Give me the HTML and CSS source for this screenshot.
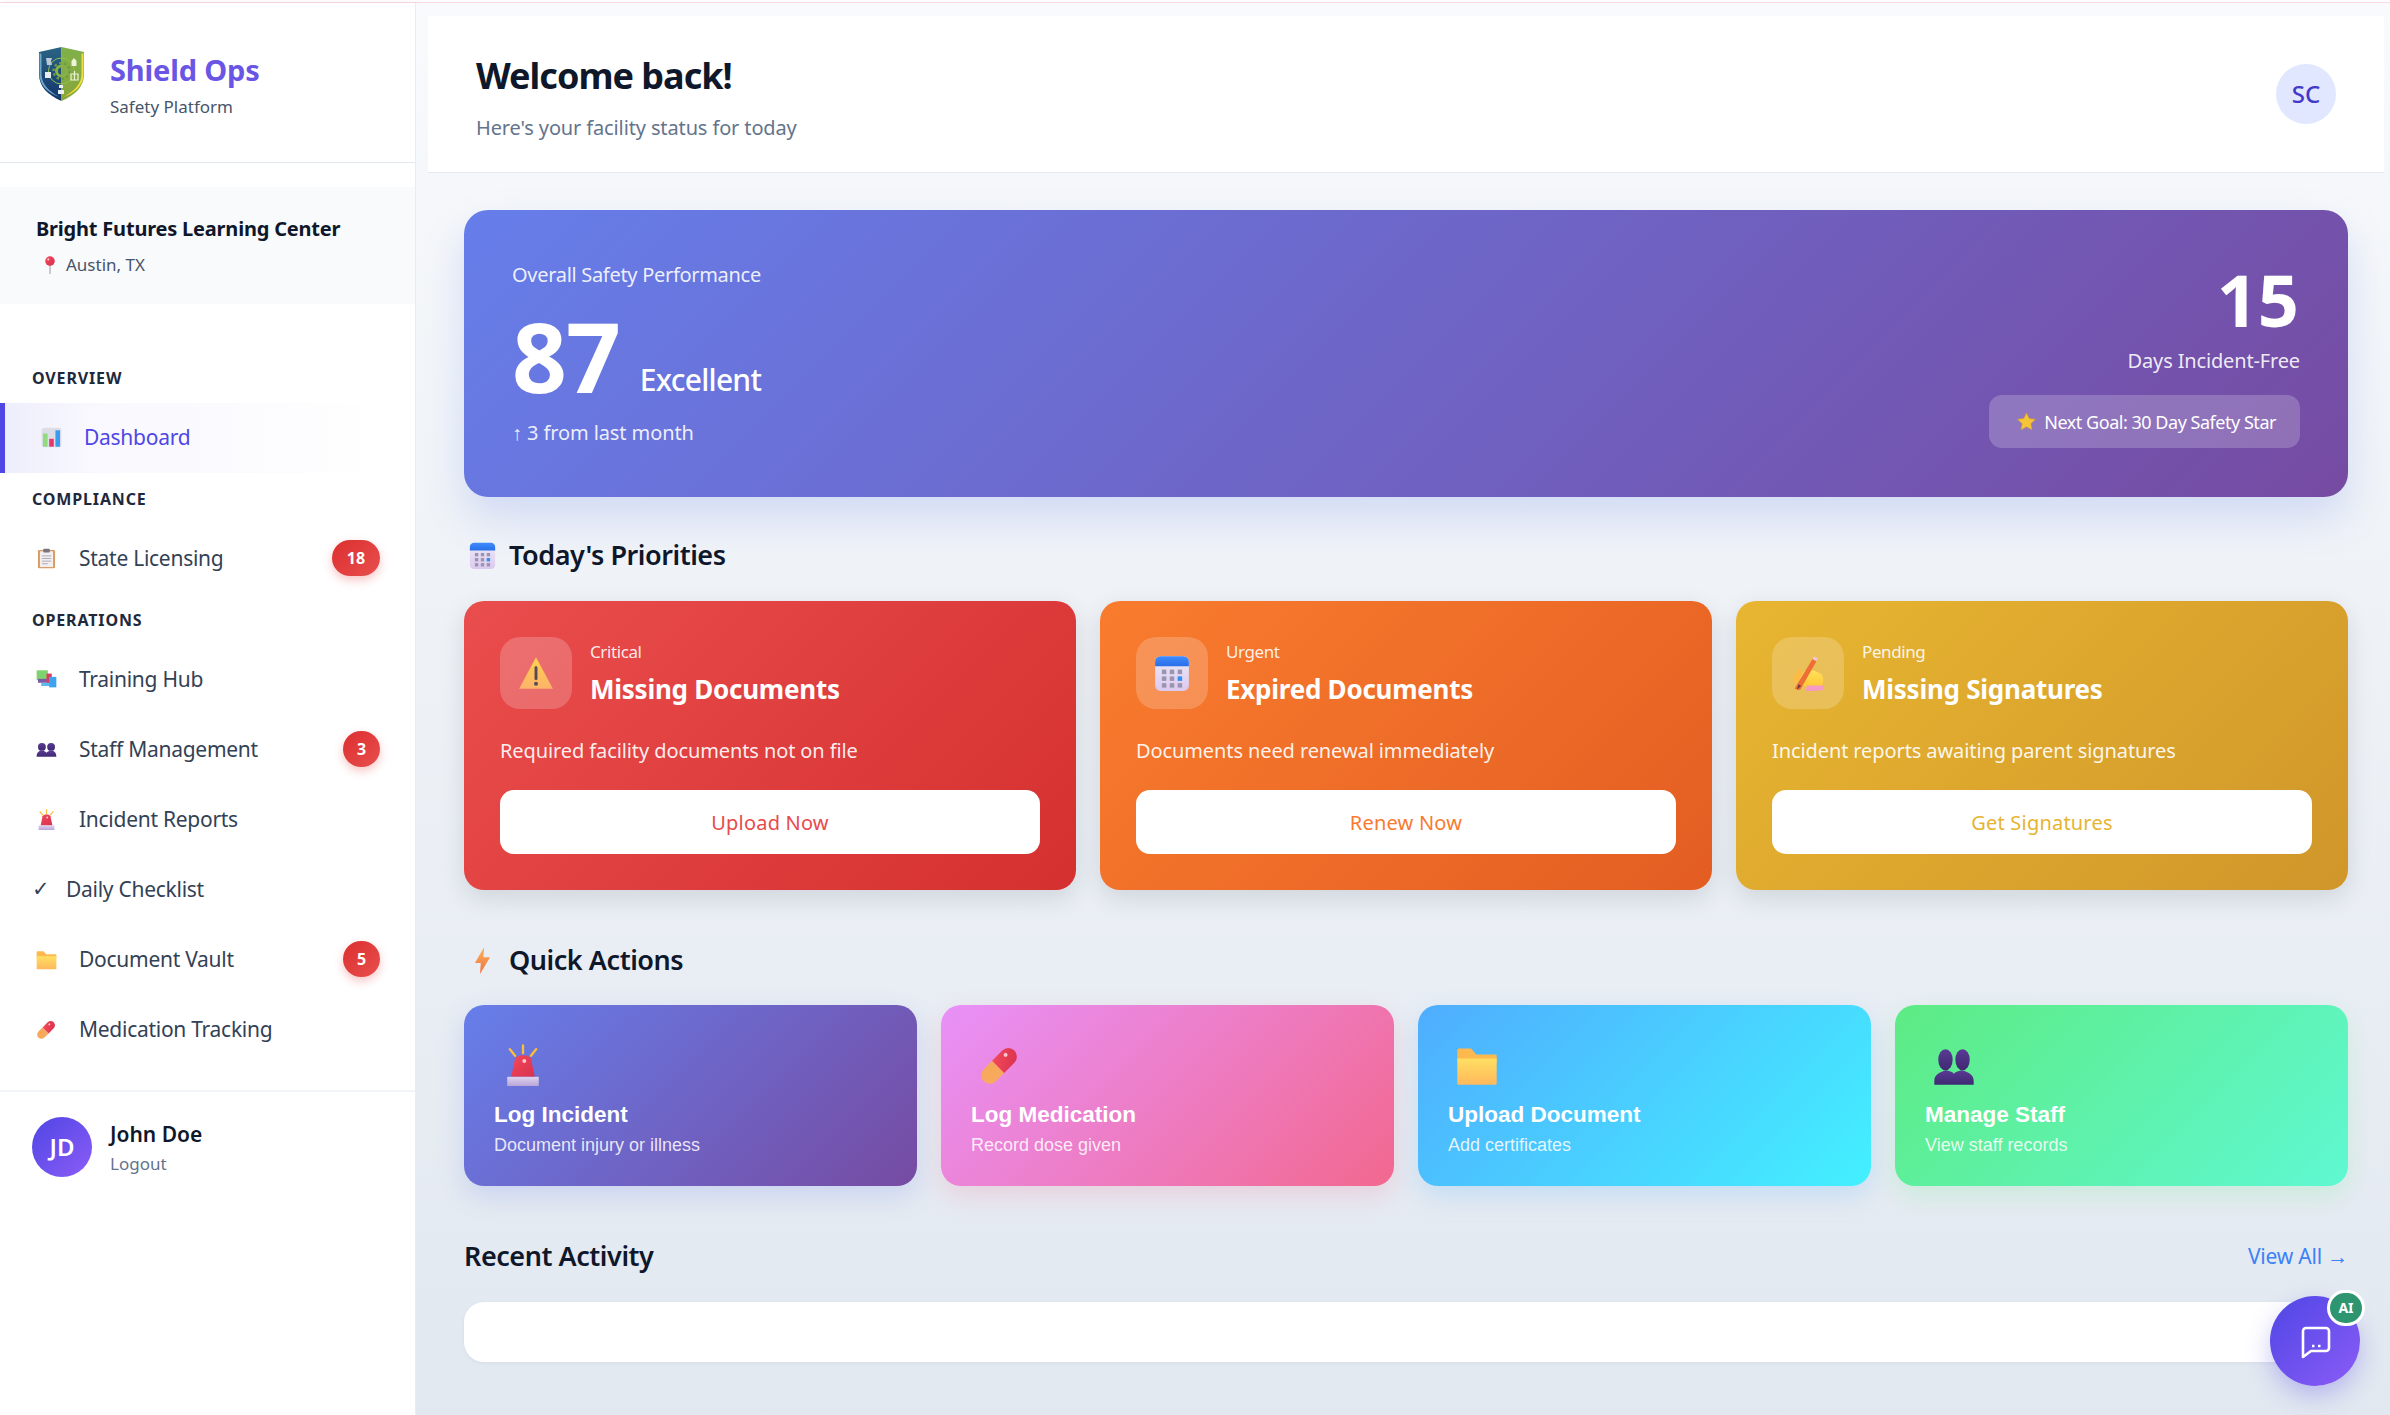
FILE: index.html
```html
<!DOCTYPE html>
<html lang="en">

<head>
    <meta charset="utf8">
    <title>Shield Ops</title>

    <link rel="stylesheet" href="styles.css">
</head>

<body>
    <svg class="icon-defs" xmlns="http://www.w3.org/2000/svg">
        <defs>
            <linearGradient id="g-blue" x1="0" y1="0" x2="0" y2="1"><stop offset="0" stop-color="#3f8cff"/><stop offset="1" stop-color="#2a6fe8"/></linearGradient>
            <linearGradient id="g-page" x1="0" y1="0" x2="0" y2="1"><stop offset="0" stop-color="#ececf6"/><stop offset="1" stop-color="#dcc9ef"/></linearGradient>
            <linearGradient id="g-warn" x1="0" y1="0" x2="0" y2="1"><stop offset="0" stop-color="#ffd24f"/><stop offset="1" stop-color="#fdb369"/></linearGradient>
            <linearGradient id="g-red" x1="0" y1="0" x2="1" y2="1"><stop offset="0" stop-color="#f2495a"/><stop offset="1" stop-color="#d9304f"/></linearGradient>
            <linearGradient id="g-pill" x1="0" y1="1" x2="1" y2="0"><stop offset="0" stop-color="#f9aa5f"/><stop offset="1" stop-color="#f6a85a"/></linearGradient>
            <linearGradient id="g-folder" x1="0" y1="0" x2="0" y2="1"><stop offset="0" stop-color="#ffdf62"/><stop offset="1" stop-color="#ffb85c"/></linearGradient>
            <linearGradient id="g-purple" x1="0" y1="0" x2="0" y2="1"><stop offset="0" stop-color="#5a3a94"/><stop offset="1" stop-color="#3f2a72"/></linearGradient>
            <linearGradient id="g-bolt" x1="0" y1="0" x2="0" y2="1"><stop offset="0" stop-color="#f9b45c"/><stop offset="1" stop-color="#f2703f"/></linearGradient>
            <linearGradient id="g-base" x1="0" y1="0" x2="0" y2="1"><stop offset="0" stop-color="#ded3ee"/><stop offset="1" stop-color="#b9a5d8"/></linearGradient>
            <linearGradient id="g-hand" x1="0" y1="0" x2="0" y2="1"><stop offset="0" stop-color="#ffe25a"/><stop offset="1" stop-color="#ffc83a"/></linearGradient>
            <linearGradient id="g-shield-l" x1="0" y1="0" x2="0" y2="1"><stop offset="0" stop-color="#2a6485"/><stop offset="1" stop-color="#14346b"/></linearGradient>
            <linearGradient id="g-shield-r" x1="0" y1="0" x2="0" y2="1"><stop offset="0" stop-color="#7fb04a"/><stop offset="1" stop-color="#8aa63a"/></linearGradient>
        </defs>

        <symbol id="i-chart" viewBox="0 0 32 32">
            <rect x="1" y="1" width="30" height="30" rx="4" fill="#dcdde6"/>
            <rect x="3" y="10" width="7" height="20" fill="#8fdc7e"/>
            <rect x="12.5" y="18" width="7" height="12" fill="#e23a68"/>
            <rect x="22" y="5" width="7" height="25" fill="#3a9cf0"/>
        </symbol>
        <symbol id="i-clipboard" viewBox="0 0 32 32">
            <rect x="3" y="3" width="26" height="28" rx="2" fill="#d99a62"/>
            <rect x="6" y="5" width="20" height="24" fill="#f3eef0"/>
            <rect x="11" y="1" width="10" height="6" rx="1.5" fill="#77757f"/>
            <path d="M9 12h14M9 16h14M9 20h14M9 24h9" stroke="#a9a6b4" stroke-width="1.4"/>
        </symbol>
        <symbol id="i-books" viewBox="0 0 32 32">
            <rect x="1" y="2" width="17" height="15" fill="#7ed36f"/>
            <rect x="3" y="15" width="17" height="6" fill="#7b5aa8"/>
            <rect x="16" y="7" width="8" height="16" fill="#dd3a60"/>
            <rect x="20" y="12" width="11" height="16" fill="#3ea3ee"/>
            <rect x="8" y="21" width="12" height="5" fill="#5fb8ee"/>
        </symbol>
        <symbol id="i-users" viewBox="0 0 32 32">
            <circle cx="9" cy="12" r="6" fill="url(#g-purple)"/>
            <circle cx="23" cy="12" r="6" fill="url(#g-purple)"/>
            <path d="M1 27c0-6 3-9 8-9 3 0 5 1 7 3 2-2 4-3 7-3 5 0 8 3 8 9z" fill="url(#g-purple)"/>
        </symbol>
        <symbol id="i-users-tall" viewBox="0 0 32 32">
            <ellipse cx="9.500" cy="12" rx="5.500" ry="8" fill="url(#g-purple)"/>
            <ellipse cx="22.500" cy="12" rx="5.500" ry="8" fill="url(#g-purple)"/>
            <path d="M1 31v-3c0-4 3-6 8.500-8 4 .5 6.500 2 6.500 3 0-1 2.500-2.500 6.500-3 5.500 2 8.500 4 8.500 8v3z" fill="url(#g-purple)"/>
        </symbol>
        <symbol id="i-alarm" viewBox="0 0 32 32">
            <path d="M16 1v6M6 4l4 5M26 4l-4 5" stroke="#fdbd3c" stroke-width="1.800" stroke-linecap="round"/>
            <path d="M10 11c1-1.500 3-2.500 6-2.500s5 1 6 2.500l3 14H7z" fill="url(#g-red)"/>
            <circle cx="17" cy="13" r="1.500" fill="#ffc6cc"/>
            <rect x="4" y="25" width="24" height="7" fill="url(#g-base)"/>
        </symbol>
        <symbol id="i-folder" viewBox="0 0 32 32">
            <path d="M1 5c0-1 .6-1.500 1.500-1.500h9l4 4.500H30c.6 0 1 .5 1 1V14H1z" fill="#fdb94e"/>
            <path d="M1 11h30v19c0 .6-.4 1-1 1H2c-.6 0-1-.4-1-1z" fill="url(#g-folder)"/>
        </symbol>
        <symbol id="i-pill" viewBox="0 0 32 32">
            <g transform="rotate(-45 16 16)">
                <path d="M16 9.500H7a6.500 6.500 0 0 0 0 13h9z" transform="translate(-2 0)" fill="url(#g-pill)"/>
                <path d="M14 9.500h11a6.500 6.500 0 0 1 0 13H14z" fill="url(#g-red)"/>
                <circle cx="24.500" cy="13.500" r="1.500" fill="#ffc6d0"/>
            </g>
        </symbol>
        <symbol id="i-calendar" viewBox="0 0 32 32">
            <rect x="1" y="1" width="30" height="31" rx="5" fill="url(#g-page)"/>
            <path d="M1 10V6a5 5 0 0 1 5-5h20a5 5 0 0 1 5 5v4z" fill="url(#g-blue)"/>
            <g fill="#9b94b0">
                <rect x="7" y="13" width="4" height="4"/><rect x="14" y="13" width="4" height="4"/><rect x="21" y="13" width="4" height="4"/>
                <rect x="7" y="19" width="4" height="4"/><rect x="14" y="19" width="4" height="4"/>
                <rect x="7" y="25" width="4" height="4"/><rect x="14" y="25" width="4" height="4"/><rect x="21" y="25" width="4" height="4"/>
            </g>
            <rect x="21" y="19" width="4" height="4" fill="#2f8ff5"/>
        </symbol>
        <symbol id="i-warning" viewBox="0 0 32 32">
            <path d="M16 2 31 30H1z" fill="url(#g-warn)"/>
            <rect x="14.700" y="10" width="2.600" height="12.500" rx="1.300" fill="#5a4a55"/>
            <circle cx="16" cy="25.500" r="1.800" fill="#5a4a55"/>
        </symbol>
        <symbol id="i-hand" viewBox="0 0 32 32">
            <path d="M13 14c3-1 6-1 9 0l6 3c2 3 2 8 0 11H13c-3-2-4-5-4-8z" fill="url(#g-hand)"/>
            <path d="M14 32c5 0 11 0 15-1 1-1 1-2 1-4H15z" fill="#f59ac0"/>
            <path d="M4 30 20 3.500l3.500 2L9 31z" fill="#ee6e35"/>
            <path d="M6 31l1.500-5 2.500 1.500z" fill="#7a3a3a"/>
            <path d="m20 3.500 1.200-2.500 3.500 2-1.200 2.500z" fill="#efc4d4"/>
            <path d="M3 27c-1-5 1-10 5-15 2 1 3 3 3 5-2 3-4 7-8 10z" fill="#fdbb45"/>
        </symbol>
        <symbol id="i-star" viewBox="0 0 32 32">
            <path d="M16 1.500 20.500 11l10.500 1.400-7.700 7.200 2 10.400L16 25l-9.300 5 2-10.400L1 12.400 11.500 11z" fill="#f6c537" stroke="#d99d2a" stroke-width="1" stroke-linejoin="round"/>
        </symbol>
        <symbol id="i-bolt" viewBox="0 0 32 32">
            <path d="M18 0 7 19h7l-1 13 12-20h-8z" fill="url(#g-bolt)"/>
        </symbol>
        <symbol id="i-pin" viewBox="0 0 32 32">
            <rect x="15" y="12" width="2" height="20" fill="#a7a4ad"/>
            <circle cx="16" cy="9" r="8.500" fill="url(#g-red)"/>
            <circle cx="13" cy="6" r="1.800" fill="#ffc6d0"/>
        </symbol>
    </svg>

    <div class="top-strip"></div>

    <div class="app">
        <aside class="sidebar">
            <div class="brand">
                <svg class="brand-logo" viewBox="0 0 47 54">
                    <path d="M23.500 0 1 5v22c0 13 9 21 22.500 27z" fill="url(#g-shield-l)"/>
                    <path d="M23.500 0 46 5v22c0 13-9 21-22.500 27z" fill="url(#g-shield-r)"/>
                    <path d="M43.500 7v20c0 10-7 17-18 23 12-4 20-12 20-23V6z" fill="#efdc3e"/>
                    <path d="M3.500 7v20c0 10 7 17 18 23-12-4-20-12-20-23V6z" fill="#6fa8c9"/>
                    <circle cx="23.500" cy="24" r="13" fill="none" stroke="#8fc04e" stroke-width="1"/>
                    <circle cx="23.500" cy="24" r="5" fill="none" stroke="#86b04a" stroke-width="3"/>
                    <circle cx="23.500" cy="24" r="8" fill="none" stroke="#6d9d42" stroke-width="2.400" stroke-dasharray="2.500 2.500"/>
                    <path d="M8 11h6l-1 3 1 4h-5z" fill="#b9c9d8"/>
                    <path d="M7 25h6v6H7z" fill="#e6edf2"/>
                    <path d="M36 11l2.500 3v5h-5v-5z" fill="#eef3d8"/>
                    <path d="M33 27h7v6h-7zM36.500 24v9" fill="none" stroke="#eef3d8" stroke-width="1.200"/>
                    <path d="M21 38h4v3h-4zM20 43h6v4h-6z" fill="#e9eef0"/>
                </svg>
                <div class="brand-text">
                    <div class="brand-name">Shield Ops</div>
                    <div class="brand-sub">Safety Platform</div>
                </div>
            </div>

            <div class="facility">
                <div class="facility-name">Bright Futures Learning Center</div>
                <div class="facility-place">
                    <svg class="pin-icon"><use href="#i-pin"/></svg>
                    Austin, TX
                </div>
            </div>

            <nav class="nav">
                <div class="nav-label">OVERVIEW</div>
                <a class="nav-row active"><svg class="nav-icon"><use href="#i-chart"/></svg>Dashboard</a>

                <div class="nav-label">COMPLIANCE</div>
                <a class="nav-row"><svg class="nav-icon"><use href="#i-clipboard"/></svg>State Licensing<span class="badge wide">18</span></a>

                <div class="nav-label">OPERATIONS</div>
                <a class="nav-row"><svg class="nav-icon"><use href="#i-books"/></svg>Training Hub</a>
                <a class="nav-row"><svg class="nav-icon"><use href="#i-users"/></svg>Staff Management<span class="badge">3</span></a>
                <a class="nav-row"><svg class="nav-icon"><use href="#i-alarm"/></svg>Incident Reports</a>
                <a class="nav-row check-row"><span class="check-mark">✓</span>Daily Checklist</a>
                <a class="nav-row"><svg class="nav-icon"><use href="#i-folder"/></svg>Document Vault<span class="badge">5</span></a>
                <a class="nav-row"><svg class="nav-icon"><use href="#i-pill"/></svg>Medication Tracking</a>
            </nav>

            <div class="user">
                <div class="user-avatar">JD</div>
                <div>
                    <div class="user-name">John Doe</div>
                    <div class="user-logout">Logout</div>
                </div>
            </div>
        </aside>

        <main class="main">
            <header class="page-head">
                <div>
                    <h1>Welcome back!</h1>
                    <p>Here's your facility status for today</p>
                </div>
                <div class="head-avatar">SC</div>
            </header>

            <div class="content">
                <section class="hero">
                    <div>
                        <div class="hero-label">Overall Safety Performance</div>
                        <div class="hero-score"><span class="score-num">87</span><span class="score-word">Excellent</span></div>
                        <div class="hero-trend">↑ 3 from last month</div>
                    </div>
                    <div class="hero-right">
                        <div class="days-num">15</div>
                        <div class="days-label">Days Incident-Free</div>
                        <div class="goal"><svg class="goal-star"><use href="#i-star"/></svg>Next Goal: 30 Day Safety Star</div>
                    </div>
                </section>

                <h2 class="section-title"><svg class="section-icon"><use href="#i-calendar"/></svg>Today's Priorities</h2>
                <div class="priorities">
                    <div class="priority red">
                        <div class="priority-head">
                            <div class="priority-icon"><svg><use href="#i-warning"/></svg></div>
                            <div>
                                <div class="priority-tag">Critical</div>
                                <div class="priority-title">Missing Documents</div>
                            </div>
                        </div>
                        <p class="priority-desc">Required facility documents not on file</p>
                        <button class="priority-btn">Upload Now</button>
                    </div>
                    <div class="priority orange">
                        <div class="priority-head">
                            <div class="priority-icon"><svg><use href="#i-calendar"/></svg></div>
                            <div>
                                <div class="priority-tag">Urgent</div>
                                <div class="priority-title">Expired Documents</div>
                            </div>
                        </div>
                        <p class="priority-desc">Documents need renewal immediately</p>
                        <button class="priority-btn">Renew Now</button>
                    </div>
                    <div class="priority yellow">
                        <div class="priority-head">
                            <div class="priority-icon"><svg><use href="#i-hand"/></svg></div>
                            <div>
                                <div class="priority-tag">Pending</div>
                                <div class="priority-title">Missing Signatures</div>
                            </div>
                        </div>
                        <p class="priority-desc">Incident reports awaiting parent signatures</p>
                        <button class="priority-btn">Get Signatures</button>
                    </div>
                </div>

                <h2 class="section-title quick-title"><svg class="section-icon"><use href="#i-bolt"/></svg>Quick Actions</h2>
                <div class="actions">
                    <button class="action purple">
                        <svg class="action-icon"><use href="#i-alarm"/></svg>
                        <span class="action-title">Log Incident</span>
                        <span class="action-sub">Document injury or illness</span>
                    </button>
                    <button class="action pink">
                        <svg class="action-icon"><use href="#i-pill"/></svg>
                        <span class="action-title">Log Medication</span>
                        <span class="action-sub">Record dose given</span>
                    </button>
                    <button class="action sky">
                        <svg class="action-icon"><use href="#i-folder"/></svg>
                        <span class="action-title">Upload Document</span>
                        <span class="action-sub">Add certificates</span>
                    </button>
                    <button class="action green">
                        <svg class="action-icon"><use href="#i-users-tall"/></svg>
                        <span class="action-title">Manage Staff</span>
                        <span class="action-sub">View staff records</span>
                    </button>
                </div>

                <div class="recent-head">
                    <h2 class="recent-title">Recent Activity</h2>
                    <a class="view-all">View All →</a>
                </div>
                <div class="recent-box"></div>
            </div>
        </main>
    </div>

    <button class="chat-fab">
        <svg class="chat-icon" viewBox="0 0 32 34">
            <path d="M6 3h20a3 3 0 0 1 3 3v17a3 3 0 0 1-3 3H11l-8 6V6a3 3 0 0 1 3-3z" fill="none" stroke="#fff" stroke-width="2.600" stroke-linejoin="round"/>
            <path d="M12 21h2.500M18 21h2.500" stroke="#fff" stroke-width="2.600"/>
        </svg>
        <span class="chat-badge">AI</span>
    </button>
</body>

</html>
```

FILE: styles.css
```css
* {
    box-sizing: border-box;
}

html,
body {
    margin: 0;
    height: 100%;
    overflow: hidden;
}

body {
    font-family: "Noto Sans", "Open Sans", sans-serif;
    color: #0f172a;
    background: #f8fafc;
}

.icon-defs {
    position: absolute;
    width: 0;
    height: 0;
}

.top-strip {
    height: 3px;
    background: #fff;
    border-bottom: 1px solid #fbd9e1;
}

.app {
    display: flex;
    height: calc(100% - 3px);
}

/* sidebar */

.sidebar {
    width: 416px;
    flex-shrink: 0;
    background: #fff;
    border-right: 1px solid #e9edf3;
    box-shadow: 2px 0 6px rgba(15, 23, 42, 0.06);
}

.brand {
    display: flex;
    gap: 25px;
    height: 160px;
    padding: 44px 0 0 38px;
    border-bottom: 1px solid #e2e8f0;
}

.brand-logo {
    width: 47px;
    height: 54px;
}

.brand-text {
    padding-top: 3px;
}

.brand-name {
    font-size: 29px;
    line-height: 40px;
    font-weight: 700;
    letter-spacing: -0.15px;
    color: #6a56e4;
}

.brand-sub {
    font-size: 17px;
    line-height: 24px;
    margin-top: 5px;
    color: #475569;
}

.facility {
    margin-top: 24px;
    height: 117px;
    padding: 28px 36px 0;
    background: #f8fafc;
}

.facility-name {
    font-size: 20px;
    line-height: 28px;
    font-weight: 700;
    letter-spacing: -0.2px;
}

.facility-place {
    display: flex;
    align-items: center;
    gap: 7px;
    margin-top: 10px;
    padding-left: 5px;
    font-size: 17px;
    line-height: 24px;
    color: #475569;
}

.pin-icon {
    width: 18px;
    height: 18px;
}

.nav {
    padding: 48px 0 25px;
}

.nav-label {
    margin: 15px 0 14px 32px;
    font-size: 16px;
    line-height: 22px;
    font-weight: 700;
    letter-spacing: 0.85px;
    color: #1e293b;
}

.nav-row {
    display: flex;
    align-items: center;
    gap: 22px;
    height: 70px;
    padding: 0 35px 2px 36px;
    font-size: 21px;
    letter-spacing: -0.27px;
    color: #334155;
}

.nav-row.active {
    border-left: 5px solid #4f46e5;
    color: #4f46e5;
    background: linear-gradient(90deg, #eeedfc 0, #f8f8fe 20%, #fff 94%);
}

.check-row {
    padding-left: 32px;
}

.check-mark {
    width: 12px;
    font-family: "DejaVu Sans", sans-serif;
    font-size: 21px;
}

.nav-icon {
    width: 21px;
    height: 21px;
    flex-shrink: 0;
}

.badge {
    margin-left: auto;
    width: 37px;
    height: 36px;
    border-radius: 18px;
    text-align: center;
    font-size: 16px;
    line-height: 36px;
    font-weight: 700;
    letter-spacing: 0;
    color: #fff;
    background: linear-gradient(135deg, #dc2f2f, #e84e4e);
    box-shadow: 0 4px 10px rgba(229, 62, 62, 0.3);
}

.badge.wide {
    width: 48px;
}

.user {
    display: flex;
    align-items: center;
    gap: 18px;
    padding: 25px 32px;
    border-top: 2px solid #f1f5f9;
}

.user-avatar {
    width: 60px;
    height: 60px;
    border-radius: 50%;
    text-align: center;
    font-size: 24px;
    line-height: 60px;
    font-weight: 600;
    color: #fff;
    background: linear-gradient(135deg, #4f46e5, #8b5cf6);
}

.user-name {
    font-size: 21px;
    line-height: 28px;
    font-weight: 600;
}

.user-logout {
    margin-top: 5px;
    font-size: 17px;
    line-height: 22px;
    color: #64748b;
}

/* main */

.main {
    flex: 1;
    padding: 13px 6px 0 12px;
    background: linear-gradient(180deg, #f8fafc 0, #e2e8f0 100%);
}

.page-head {
    display: flex;
    justify-content: space-between;
    align-items: center;
    height: 157px;
    padding: 0 48px;
    background: #fff;
    border-bottom: 1px solid #e2e8f0;
}

.page-head h1 {
    margin: 4px 0 0;
    font-size: 36px;
    line-height: 48px;
    font-weight: 700;
    letter-spacing: -1px;
}

.page-head p {
    margin: 14px 0 0;
    font-size: 20px;
    line-height: 27px;
    letter-spacing: -0.13px;
    color: #64748b;
}

.head-avatar {
    width: 60px;
    height: 60px;
    border-radius: 50%;
    text-align: center;
    font-size: 24px;
    line-height: 60px;
    font-weight: 500;
    color: #4338ca;
    background: #e0e7ff;
}

.content {
    padding: 37px 36px 0;
}

.hero {
    display: flex;
    justify-content: space-between;
    align-items: center;
    height: 287px;
    padding: 0 48px;
    border-radius: 24px;
    color: #fff;
    background: linear-gradient(135deg, #667eea 0, #764ba2 100%);
    box-shadow: 0 20px 40px rgba(102, 126, 234, 0.22);
}

.hero-label {
    font-size: 20px;
    line-height: 27px;
    letter-spacing: -0.3px;
    color: rgba(255, 255, 255, 0.9);
}

.hero-score {
    display: flex;
    align-items: flex-end;
    gap: 20px;
    margin-top: 20px;
}

.score-num {
    font-size: 96px;
    line-height: 96px;
    font-weight: 700;
    letter-spacing: -1px;
}

.score-word {
    margin-bottom: 4px;
    font-size: 30px;
    line-height: 40px;
    font-weight: 500;
    letter-spacing: -0.75px;
}

.hero-trend {
    margin-top: 15px;
    font-size: 20px;
    line-height: 27px;
    letter-spacing: -0.1px;
    color: rgba(255, 255, 255, 0.9);
}

.hero-right {
    display: flex;
    flex-direction: column;
    align-items: flex-end;
    padding-top: 4px;
}

.days-num {
    margin-right: 1px;
    font-size: 72px;
    line-height: 72px;
    font-weight: 700;
}

.days-label {
    margin-top: 12px;
    font-size: 20px;
    line-height: 27px;
    letter-spacing: -0.15px;
    color: rgba(255, 255, 255, 0.9);
}

.goal {
    display: flex;
    align-items: center;
    gap: 8px;
    height: 53px;
    margin-top: 21px;
    padding: 0 24px 0 28px;
    border-radius: 13px;
    font-size: 18px;
    letter-spacing: -0.47px;
    background: rgba(255, 255, 255, 0.2);
}

.goal-star {
    width: 19px;
    height: 19px;
}

.section-title {
    display: flex;
    align-items: center;
    gap: 13px;
    height: 36px;
    margin: 40px 0 28px;
    padding-left: 5px;
    font-size: 27px;
    line-height: 36px;
    font-weight: 600;
    letter-spacing: -0.45px;
}

.quick-title {
    margin-top: 52px;
    margin-bottom: 27px;
}

.section-icon {
    width: 27px;
    height: 27px;
}

.priorities {
    display: grid;
    grid-template-columns: repeat(3, 1fr);
    gap: 24px;
}

.priority {
    height: 289px;
    padding: 36px;
    border-radius: 20px;
    color: #fff;
    box-shadow: 0 8px 24px rgba(15, 23, 42, 0.12);
}

.priority.red {
    color: #e94b4b;
    background: linear-gradient(135deg, #ea4d4d, #d53030);
}

.priority.orange {
    color: #f97a2e;
    background: linear-gradient(135deg, #f97c2e, #e35d22);
}

.priority.yellow {
    color: #e6b430;
    background: linear-gradient(135deg, #e8b631, #d0962a);
}

.priority-head {
    display: flex;
    align-items: center;
    gap: 18px;
    color: #fff;
}

.priority-icon {
    display: flex;
    justify-content: center;
    align-items: center;
    width: 72px;
    height: 72px;
    border-radius: 20px;
    background: rgba(255, 255, 255, 0.2);
}

.priority-icon svg {
    width: 36px;
    height: 36px;
}

.priority-tag {
    margin-top: -1px;
    font-size: 17px;
    line-height: 24px;
    letter-spacing: -0.4px;
    color: rgba(255, 255, 255, 0.9);
}

.priority-title {
    margin-top: 8px;
    font-size: 26px;
    line-height: 34px;
    font-weight: 700;
    letter-spacing: -0.25px;
}

.priority-desc {
    margin: 28px 0 26px;
    font-size: 20px;
    line-height: 27px;
    letter-spacing: -0.1px;
    color: rgba(255, 255, 255, 0.92);
}

.priority-btn {
    width: 100%;
    height: 64px;
    border: 0 none;
    border-radius: 14px;
    font-family: inherit;
    font-size: 20px;
    font-weight: 400;
    letter-spacing: 0.2px;
    color: inherit;
    background: #fff;
}

.actions {
    display: grid;
    grid-template-columns: repeat(4, 1fr);
    gap: 24px;
}

.action {
    display: flex;
    flex-direction: column;
    align-items: flex-start;
    height: 181px;
    padding: 39px 30px 0;
    border: 0 none;
    border-radius: 20px;
    font-family: "Liberation Sans", Arial, sans-serif;
    color: #fff;
    text-align: left;
}

.action.purple {
    background: linear-gradient(135deg, #667eea, #764ba2);
    box-shadow: 0 10px 26px rgba(102, 126, 234, 0.22);
}

.action.pink {
    background: linear-gradient(135deg, #e891f9, #f2688f);
    box-shadow: 0 10px 26px rgba(240, 104, 143, 0.2);
}

.action.sky {
    background: linear-gradient(135deg, #4fadfe, #43f0ff);
    box-shadow: 0 10px 26px rgba(79, 172, 254, 0.22);
}

.action.green {
    background: linear-gradient(135deg, #5deb83, #5ff8d2);
    box-shadow: 0 10px 26px rgba(93, 235, 131, 0.2);
}

.action-icon {
    width: 42px;
    height: 42px;
    margin: 0 0 14px 8px;
}

.action-title {
    font-size: 22.500px;
    line-height: 30px;
    font-weight: 700;
}

.action-sub {
    margin-top: 4px;
    font-size: 18px;
    line-height: 22px;
    color: rgba(255, 255, 255, 0.85);
}

.recent-head {
    display: flex;
    justify-content: space-between;
    align-items: center;
    margin: 52px 0 28px;
    height: 36px;
}

.recent-title {
    margin: 0;
    font-size: 27px;
    line-height: 36px;
    font-weight: 600;
    letter-spacing: -0.45px;
}

.view-all {
    font-size: 21px;
    letter-spacing: -0.2px;
    color: #3b82f6;
}

.recent-box {
    height: 60px;
    border-radius: 20px;
    background: #fff;
    box-shadow: 0 1px 4px rgba(15, 23, 42, 0.05);
}

.chat-fab {
    position: fixed;
    right: 30px;
    bottom: 29px;
    width: 90px;
    height: 90px;
    padding: 0;
    border: 0 none;
    border-radius: 50%;
    background: linear-gradient(135deg, #4f46e5, #8b5cf6);
    box-shadow: 0 10px 24px rgba(79, 70, 229, 0.3);
}

.chat-icon {
    position: absolute;
    left: 30px;
    top: 29px;
    width: 32px;
    height: 34px;
}

.chat-badge {
    position: absolute;
    top: -6px;
    right: -5px;
    width: 38px;
    height: 36px;
    border: 3px solid #fff;
    border-radius: 18px;
    font-family: "Noto Sans", sans-serif;
    font-size: 14px;
    line-height: 30px;
    font-weight: 700;
    color: #fff;
    background: #2d9670;
}
```
